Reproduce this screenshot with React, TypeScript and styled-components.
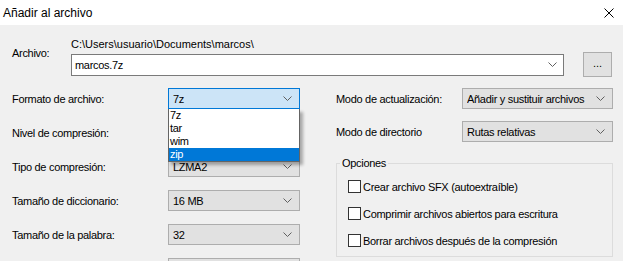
import styled, { createGlobalStyle } from "styled-components";

const GlobalStyle = createGlobalStyle`
    html, body {
        margin: 0;
        padding: 0;
        background: #f0f0f0;
    }
    body {
        width: 623px;
        height: 261px;
        overflow: hidden;
        font-family: "Liberation Sans", Arial, sans-serif;
        font-size: 11px;
        letter-spacing: -0.3px;
        color: #000;
    }
`;

const Dialog = styled.div`
    width: 623px;
    height: 261px;
    overflow: hidden;
    display: flex;
    flex-direction: column;
    background: #f0f0f0;
`;

const TitleBar = styled.div`
    height: 25px;
    flex: none;
    background: #fff;
    display: flex;
    align-items: center;
    justify-content: space-between;
    padding: 0 9px 0 3px;
    font-size: 12px;
    letter-spacing: 0;
`;

const CloseIcon = () => (
    <svg width="10" height="10" viewBox="0 0 10 10">
        <path d="M0.5 0.5 L9.5 9.5 M9.5 0.5 L0.5 9.5" stroke="#000" strokeWidth="1" />
    </svg>
);

const Content = styled.div`
    padding: 12px 11px 0 12px;
    display: flex;
    flex-direction: column;
`;

const FileSection = styled.div`
    display: grid;
    grid-template-columns: 59px 1fr;
    grid-template-rows: 14px auto;
    row-gap: 1px;
`;

const FileLabel = styled.div`
    grid-row: 1 / 3;
    padding-top: 10px;
`;

const PathText = styled.div`
    line-height: 14px;
    white-space: nowrap;
    letter-spacing: 0;
`;

const InputRow = styled.div`
    display: flex;
    align-items: center;
    gap: 19px;
`;

const EditCombo = styled.div`
    flex: 1;
    height: 22px;
    box-sizing: border-box;
    border: 1px solid #7a7a7a;
    background: #fff;
    display: flex;
    align-items: center;
    justify-content: space-between;
    padding: 0 6px 0 3px;
`;

const BrowseButton = styled.div`
    width: 29px;
    height: 25px;
    box-sizing: border-box;
    border: 1px solid #adadad;
    background: #e1e1e1;
    display: flex;
    align-items: center;
    justify-content: center;
    padding-bottom: 3px;
    letter-spacing: 0;
`;

const Lower = styled.div`
    margin-top: 11px;
    display: grid;
    grid-template-columns: 288px 277px;
    column-gap: 36px;
`;

const Column = styled.div`
    display: flex;
    flex-direction: column;
`;

const Row = styled.div<{ $labelWidth: number; $gap: number }>`
    display: grid;
    grid-template-columns: ${(p) => p.$labelWidth}px 1fr;
    align-items: center;
    height: 21px;
    flex: none;
    margin-bottom: ${(p) => p.$gap}px;
`;

const ComboWrap = styled.div`
    position: relative;
`;

const Combo = styled.div<{ $focused?: boolean }>`
    height: 21px;
    box-sizing: border-box;
    border: 1px solid ${(p) => (p.$focused ? "#0078d7" : "#adadad")};
    background: ${(p) => (p.$focused ? "#cce4f7" : "#e1e1e1")};
    display: flex;
    align-items: center;
    gap: 4px;
    padding: 0 7px 0 4px;
    white-space: nowrap;
`;

const ComboText = styled.span`
    flex: 1;
    min-width: 0;
    overflow: hidden;
`;

const Chevron = () => (
    <svg width="9" height="5" viewBox="0 0 9 5" style={{ flex: "none" }}>
        <path d="M0.5 0.5 L4.5 4.5 L8.5 0.5" stroke="#606060" strokeWidth="1" fill="none" />
    </svg>
);

const DropList = styled.div`
    position: absolute;
    left: 0;
    right: 0;
    top: 21px;
    background: #fff;
    border: 1px solid #646464;
    border-top: none;
    box-shadow: 3px 3px 3px rgba(0, 0, 0, 0.3);
    z-index: 2;
`;

const DropItem = styled.div<{ $selected?: boolean }>`
    height: 13px;
    line-height: 13px;
    padding-left: 1px;
    background: ${(p) => (p.$selected ? "#0078d7" : "transparent")};
    color: ${(p) => (p.$selected ? "#fff" : "#000")};
`;

const GroupBox = styled.fieldset`
    margin: 14px 0 0 0;
    padding: 0 0 9px 11px;
    border: 1px solid #dcdcdc;
    min-width: 0;
    height: 101px;
    box-sizing: border-box;
    display: flex;
    flex-direction: column;
    gap: 14px;
`;

const Legend = styled.legend`
    margin-left: -8px;
    padding: 0 2px;
    line-height: 14px;
`;

const CheckRow = styled.label`
    display: flex;
    align-items: center;
    gap: 2px;
    height: 13px;
    &:first-of-type {
        margin-top: 10px;
    }
`;

const CheckBox = styled.span`
    width: 13px;
    height: 13px;
    box-sizing: border-box;
    border: 1px solid #333;
    background: #fff;
`;

const leftRows = [
    { label: "Nivel de compresión:", value: "" },
    { label: "Tipo de compresión:", value: "LZMA2" },
    { label: "Tamaño de diccionario:", value: "16 MB" },
    { label: "Tamaño de la palabra:", value: "32" },
    { label: "", value: "" },
];

const options = [
    "Crear archivo SFX (autoextraíble)",
    "Comprimir archivos abiertos para escritura",
    "Borrar archivos después de la compresión",
];

export default function App() {
    return (
        <Dialog>
            <GlobalStyle />
            <TitleBar>
                <span>Añadir al archivo</span>
                <CloseIcon />
            </TitleBar>
            <Content>
                <FileSection>
                    <FileLabel>Archivo:</FileLabel>
                    <PathText>C:\Users\usuario\Documents\marcos\</PathText>
                    <InputRow>
                        <EditCombo>
                            <span>marcos.7z</span>
                            <Chevron />
                        </EditCombo>
                        <BrowseButton>...</BrowseButton>
                    </InputRow>
                </FileSection>
                <Lower>
                    <Column>
                        <Row $labelWidth={156} $gap={13}>
                            <span>Formato de archivo:</span>
                            <ComboWrap>
                                <Combo $focused>
                                    <ComboText>7z</ComboText>
                                    <Chevron />
                                </Combo>
                                <DropList>
                                    <DropItem>7z</DropItem>
                                    <DropItem>tar</DropItem>
                                    <DropItem>wim</DropItem>
                                    <DropItem $selected>zip</DropItem>
                                </DropList>
                            </ComboWrap>
                        </Row>
                        {leftRows.map((r, i) => (
                            <Row key={i} $labelWidth={156} $gap={13}>
                                <span>{r.label}</span>
                                <Combo>
                                    <ComboText>{r.value}</ComboText>
                                    <Chevron />
                                </Combo>
                            </Row>
                        ))}
                    </Column>
                    <Column>
                        <Row $labelWidth={126} $gap={12}>
                            <span>Modo de actualización:</span>
                            <Combo>
                                <ComboText>Añadir y sustituir archivos</ComboText>
                                <Chevron />
                            </Combo>
                        </Row>
                        <Row $labelWidth={126} $gap={0}>
                            <span>Modo de directorio</span>
                            <Combo>
                                <ComboText>Rutas relativas</ComboText>
                                <Chevron />
                            </Combo>
                        </Row>
                        <GroupBox>
                            <Legend>Opciones</Legend>
                            {options.map((o) => (
                                <CheckRow key={o}>
                                    <CheckBox />
                                    <span>{o}</span>
                                </CheckRow>
                            ))}
                        </GroupBox>
                    </Column>
                </Lower>
            </Content>
        </Dialog>
    );
}
